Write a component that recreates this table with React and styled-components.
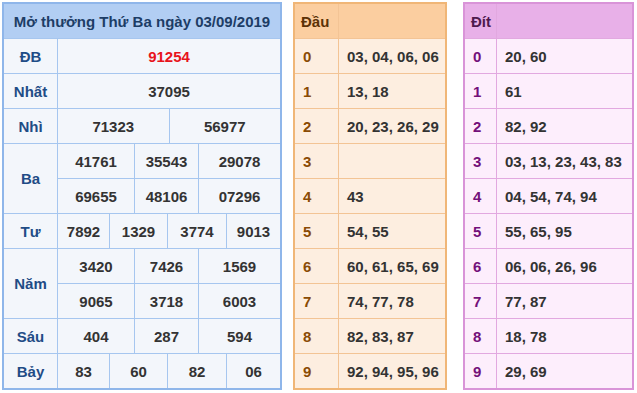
import React from 'react'
import styled, { createGlobalStyle } from 'styled-components'

const GlobalStyle = createGlobalStyle`
  html, body {
    margin: 0;
    padding: 0;
    background: #fff;
  }
  body {
    font-family: "Liberation Sans", Arial, sans-serif;
    font-size: 15px;
    font-weight: bold;
  }
`

const prizes = [
  { label: 'ĐB', rows: [['91254']], cols: '1fr', red: true },
  { label: 'Nhất', rows: [['37095']], cols: '1fr' },
  { label: 'Nhì', rows: [['71323', '56977']], cols: '1fr 1fr' },
  { label: 'Ba', rows: [['41761', '35543', '29078'], ['69655', '48106', '07296']], cols: '76px 63px 1fr' },
  { label: 'Tư', rows: [['7892', '1329', '3774', '9013']], cols: '51px 57px 58px 1fr' },
  { label: 'Năm', rows: [['3420', '7426', '1569'], ['9065', '3718', '6003']], cols: '76px 63px 1fr' },
  { label: 'Sáu', rows: [['404', '287', '594']], cols: '76px 63px 1fr' },
  { label: 'Bảy', rows: [['83', '60', '82', '06']], cols: '51px 57px 58px 1fr' },
]

const dau = ['03, 04, 06, 06', '13, 18', '20, 23, 26, 29', '', '43', '54, 55', '60, 61, 65, 69', '74, 77, 78', '82, 83, 87', '92, 94, 95, 96']
const dit = ['20, 60', '61', '82, 92', '03, 13, 23, 43, 83', '04, 54, 74, 94', '55, 65, 95', '06, 06, 26, 96', '77, 87', '18, 78', '29, 69']

const themes = {
  orange: { line: '#f3c495', outer: '#f0b677', head: '#fbcea0', cell: '#fdeee0', title: '#5c3206', key: '#8a4b05' },
  purple: { line: '#e2a8e0', outer: '#d994d8', head: '#e8b0e8', cell: '#fdeefc', title: '#4d1a4d', key: '#74107a' },
}

export default function App() {
  return (
    <>
      <GlobalStyle />
      <Page>
        <Results>
          <Title>Mở thưởng Thứ Ba ngày 03/09/2019</Title>
          {prizes.map(p => (
            <React.Fragment key={p.label}>
              <Label $span={p.rows.length}>{p.label}</Label>
              {p.rows.map((row, i) => (
                <ValueRow key={i} $cols={p.cols}>
                  {row.map((n, j) => (
                    <Value key={j} $red={p.red}>{n}</Value>
                  ))}
                </ValueRow>
              ))}
            </React.Fragment>
          ))}
        </Results>
        <Loto $t={themes.orange} $first="43px" $gap="11px">
          <HeadCell $t={themes.orange}>Đầu</HeadCell>
          <HeadCell $t={themes.orange} />
          {dau.map((v, i) => (
            <React.Fragment key={i}>
              <KeyCell $t={themes.orange}>{i}</KeyCell>
              <NumCell $t={themes.orange}>{v}</NumCell>
            </React.Fragment>
          ))}
        </Loto>
        <Loto $t={themes.purple} $first="31px" $gap="16px" $width="171px">
          <HeadCell $t={themes.purple}>Đít</HeadCell>
          <HeadCell $t={themes.purple} />
          {dit.map((v, i) => (
            <React.Fragment key={i}>
              <KeyCell $t={themes.purple}>{i}</KeyCell>
              <NumCell $t={themes.purple}>{v}</NumCell>
            </React.Fragment>
          ))}
        </Loto>
      </Page>
    </>
  )
}

const Page = styled.div`
  display: flex;
  align-items: flex-start;
  padding: 2px 0 0 2px;
`

const Results = styled.div`
  box-sizing: border-box;
  width: 280px;
  display: grid;
  grid-template-columns: 53px 1fr;
  grid-auto-rows: 34px;
  gap: 1px;
  background: #a6c6ef;
  border: 2px solid #8fb6ea;
`

const Cell = styled.div`
  display: flex;
  align-items: center;
  justify-content: center;
  background: #f3f6fb;
  color: #333;
  white-space: nowrap;
`

const Title = styled(Cell)`
  grid-column: 1 / span 2;
  background: #b2cef3;
  color: #1d3d66;
`

const Label = styled(Cell)`
  grid-column: 1;
  grid-row: span ${p => p.$span};
  color: #1f4c86;
`

const ValueRow = styled.div`
  grid-column: 2;
  display: grid;
  grid-template-columns: ${p => p.$cols};
  gap: 1px;
`

const Value = styled(Cell)`
  color: ${p => (p.$red ? '#e8141b' : '#333')};
`

const Loto = styled.div`
  box-sizing: border-box;
  width: ${p => p.$width || '154px'};
  margin-left: ${p => p.$gap};
  display: grid;
  grid-template-columns: ${p => p.$first} 1fr;
  grid-auto-rows: 34px;
  gap: 1px;
  background: ${p => p.$t.line};
  border: 2px solid ${p => p.$t.outer};
`

const HeadCell = styled.div`
  display: flex;
  align-items: center;
  padding-left: 6px;
  background: ${p => p.$t.head};
  color: ${p => p.$t.title};
`

const KeyCell = styled.div`
  display: flex;
  align-items: center;
  padding-left: 8px;
  background: ${p => p.$t.cell};
  color: ${p => p.$t.key};
`

const NumCell = styled.div`
  display: flex;
  align-items: center;
  padding-left: 8px;
  background: ${p => p.$t.cell};
  color: #333;
  white-space: nowrap;
`
